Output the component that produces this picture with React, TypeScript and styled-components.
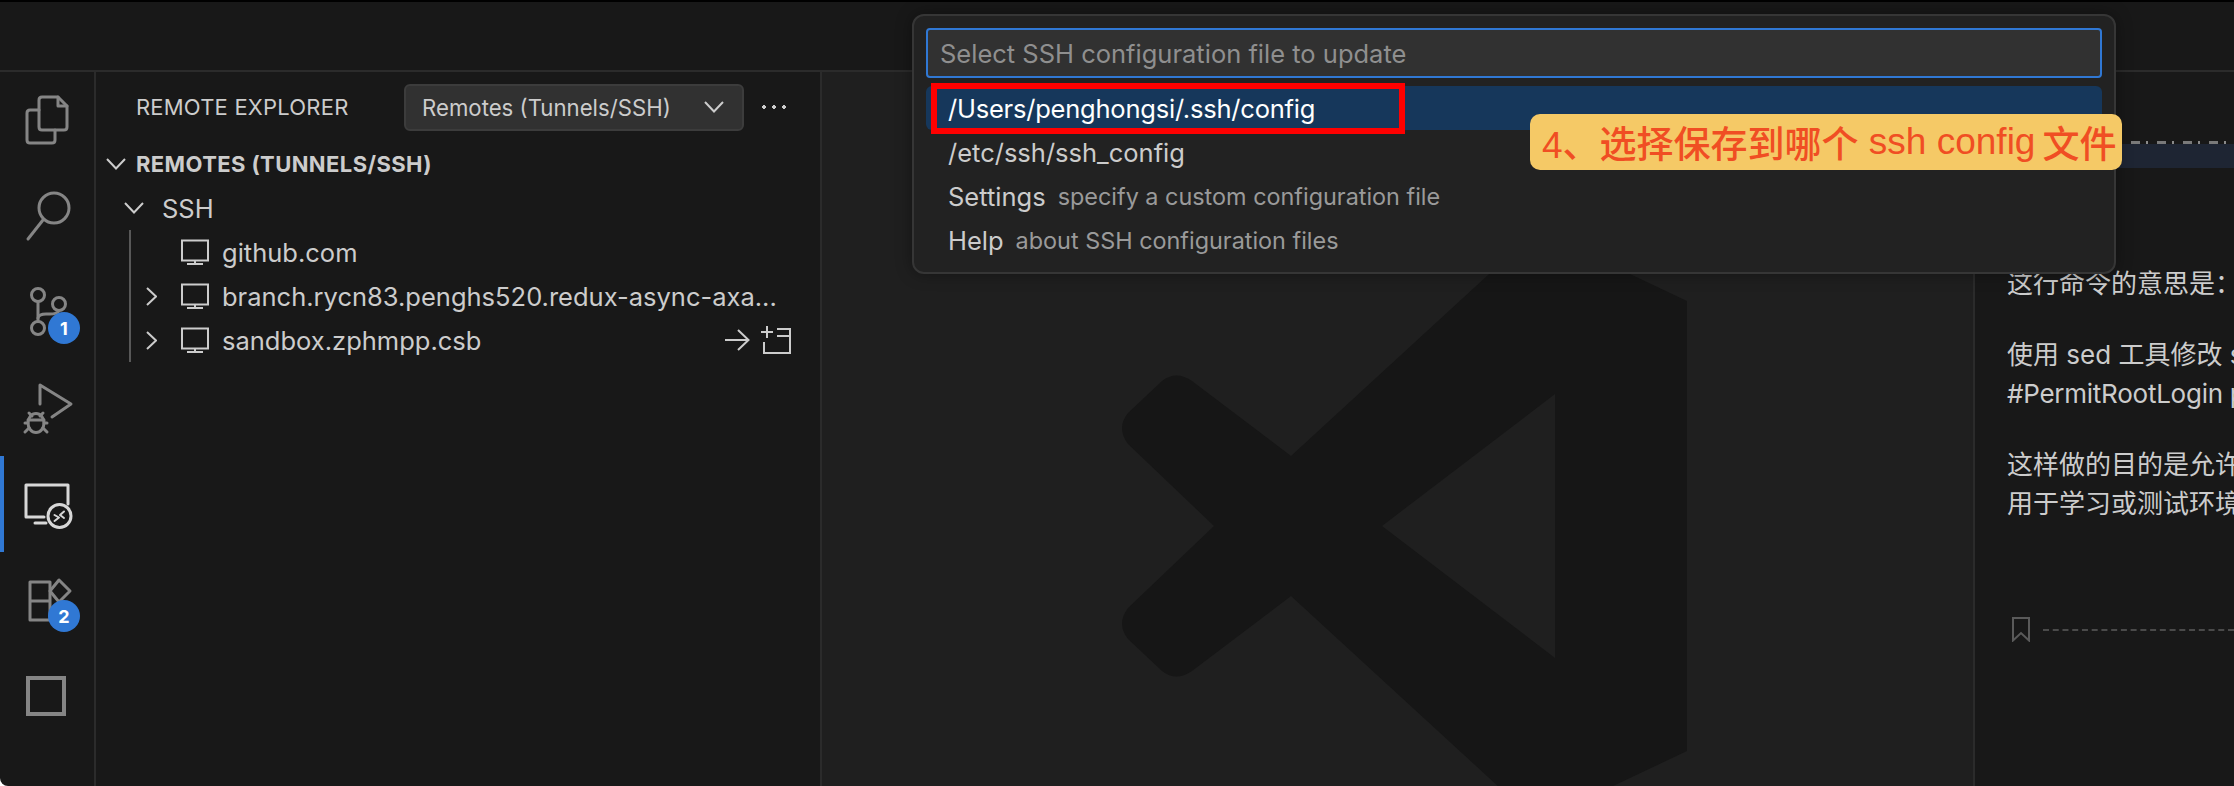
import * as React from 'react';
import styled, { createGlobalStyle } from 'styled-components';

const GlobalStyle = createGlobalStyle`
    html, body {
        margin: 0;
        padding: 0;
        width: 2234px;
        height: 786px;
        overflow: hidden;
        background: #ffffff;
    }
    * {
        box-sizing: border-box;
    }
`;

const UI_FONT = `Inter, "Noto Sans", "Noto Sans CJK SC", sans-serif`;

const Window = styled.div`
    position: relative;
    width: 2234px;
    height: 786px;
    display: flex;
    flex-direction: column;
    overflow: hidden;
    border-bottom-left-radius: 8px;
    background: #181818;
    color: #cccccc;
    font-family: ${UI_FONT};
`;
const TitleBar = styled.div`
    flex: none;
    height: 72px;
    border-top: 2px solid #000000;
    border-bottom: 2px solid #2b2b2b;
    background: #181818;
`;
const Body = styled.div`
    flex: 1;
    display: flex;
    min-height: 0;
`;

// activity bar
const ActivityBar = styled.div`
    flex: none;
    width: 96px;
    display: flex;
    flex-direction: column;
    border-right: 2px solid #2b2b2b;
`;
const ActivityItem = styled.div<{ $active?: boolean }>`
    position: relative;
    flex: none;
    width: 94px;
    height: 96px;
    color: ${p => (p.$active ? '#d7d7d7' : '#858585')};
    box-shadow: ${p => (p.$active ? 'inset 4px 0 0 #3078d4' : 'none')};
    svg {
        display: block;
    }
`;
const Badge = styled.div`
    position: absolute;
    left: 48px;
    top: 48px;
    width: 32px;
    height: 32px;
    border-radius: 50%;
    background: #3078d4;
    color: #ffffff;
    font-size: 18px;
    font-weight: 700;
    display: flex;
    align-items: center;
    justify-content: center;
`;

// sidebar
const Sidebar = styled.div`
    flex: none;
    width: 726px;
    display: flex;
    flex-direction: column;
    border-right: 2px solid #2b2b2b;
`;
const SidebarHeader = styled.div`
    flex: none;
    height: 70px;
    display: flex;
    align-items: center;
    padding: 0 34px 0 40px;
`;
const SidebarTitle = styled.div`
    flex: 1;
    font-size: 22px;
    letter-spacing: 0.2px;
    color: #cccccc;
`;
const SelectBox = styled.div`
    flex: none;
    width: 340px;
    height: 47px;
    display: flex;
    align-items: center;
    justify-content: space-between;
    padding: 0 18px 0 16px;
    background: #313131;
    border: 2px solid #3c3c3c;
    border-radius: 6px;
    font-size: 22.2px;
    color: #cccccc;
`;
const MoreDots = styled.div`
    flex: none;
    margin-left: 18px;
    width: 24px;
    height: 4px;
    background: radial-gradient(circle 2px at 2px 2px, #cccccc 98%, transparent) 0 0 / 10px 4px repeat-x;
`;
const TreeRow = styled.div<{ $indent: number; $slot: number }>`
    flex: none;
    height: 44px;
    display: flex;
    align-items: center;
    padding-left: ${p => p.$indent}px;
    font-size: 25.5px;
    white-space: nowrap;
    > svg:first-child {
        flex: none;
        margin-right: ${p => p.$slot}px;
    }
`;
const SectionRow = styled(TreeRow)`
    font-size: 22px;
    font-weight: 700;
    letter-spacing: 0.4px;
`;
const TreeGroup = styled.div`
    flex: none;
    margin-left: 33px;
    border-left: 2px solid #585858;
    display: flex;
    flex-direction: column;
`;
const HostRow = styled.div`
    flex: none;
    height: 44px;
    display: flex;
    align-items: center;
    font-size: 25.5px;
    white-space: nowrap;
`;
const ChevronSlot = styled.div`
    flex: none;
    width: 34px;
    margin-left: 15px;
    display: flex;
    align-items: center;
`;
const HostIcon = styled.svg`
    flex: none;
    margin-right: 12px;
`;
const HostActions = styled.div`
    margin-left: auto;
    display: flex;
    align-items: center;
    margin-right: 29px;
    gap: 10px;
`;

// editor
const Editor = styled.div`
    flex: none;
    width: 1153px;
    overflow: hidden;
    padding: 158px 0 0 294px;
    background: #1f1f1f;
    border-right: 2px solid #2b2b2b;
`;
const Watermark = styled.svg`
    display: block;
    fill: #161616;
`;

// right panel
const ChatPanel = styled.div`
    flex: 1;
    min-width: 0;
    overflow: hidden;
    background: #181818;
    font-size: 26px;
    line-height: 39px;
    color: #cccccc;
    white-space: nowrap;
`;
const ClippedLine = styled.div`
    height: 3px;
    margin-top: 69px;
    background: repeating-linear-gradient(90deg, #7a7a7a 0 9px, transparent 9px 15px, #8a8a8a 15px 17px, transparent 17px 26px);
`;
const CodeBand = styled.div`
    height: 24px;
    background: #1e2533;
`;
const Paragraphs = styled.div`
    margin-top: 96px;
    padding-left: 32px;
    display: flex;
    flex-direction: column;
    gap: 32px;
`;
const Paragraph = styled.div``;
const LatinLine = styled.div`
    letter-spacing: -0.25px;
`;
const Separator = styled.div`
    display: flex;
    align-items: center;
    margin-top: 94px;
    padding-left: 37px;
    gap: 13px;
    color: #5a5a5a;
`;
const DashedRule = styled.div`
    flex: 1;
    border-top: 2px dashed #4a4a4a;
`;

// quick pick
const QuickPick = styled.div`
    position: absolute;
    left: 912px;
    top: 14px;
    width: 1204px;
    height: 260px;
    padding: 12px;
    background: #222222;
    border: 2px solid #363636;
    border-radius: 12px;
    box-shadow: 0 0 16px rgba(0, 0, 0, 0.36);
    font-size: 25.5px;
`;
const PickInput = styled.div`
    height: 50px;
    display: flex;
    align-items: center;
    padding: 1px 12px 0;
    background: #313131;
    border: 2px solid #3078d4;
    border-radius: 4px;
    color: #8f8f8f;
`;
const PickList = styled.div`
    margin-top: 8px;
    display: flex;
    flex-direction: column;
`;
const PickRow = styled.div<{ $selected?: boolean }>`
    height: 44px;
    padding: 0 22px;
    display: flex;
    align-items: center;
    gap: 12px;
    border-radius: 6px;
    color: ${p => (p.$selected ? '#ffffff' : '#cccccc')};
    background: ${p => (p.$selected ? '#16375b' : 'transparent')};
    letter-spacing: ${p => (p.$selected ? '-0.22px' : '0')};
    white-space: nowrap;
`;
const PickDetail = styled.span`
    font-size: 23.4px;
    color: #9a9a9a;
`;
const RedBox = styled.div`
    position: absolute;
    left: 931px;
    top: 83px;
    width: 474px;
    height: 51px;
    border: 6px solid #ff0000;
`;
const Callout = styled.div`
    position: absolute;
    left: 1530px;
    top: 114px;
    width: 592px;
    height: 56px;
    padding-left: 12px;
    display: flex;
    align-items: center;
    background: #f5c966;
    border-radius: 10px;
    color: #f04e23;
    font-family: "Liberation Sans", "Noto Sans CJK SC", sans-serif;
    font-size: 37px;
    font-weight: 500;
    white-space: pre;
`;
const CalloutLatin = styled.span`
    font-weight: 400;
    margin-right: 7px;
`;

const ActivityIcon: React.FC<{ children: React.ReactNode }> = ({ children }) => (
    <svg width="94" height="96" viewBox="0 0 94 96" fill="none" stroke="currentColor" strokeWidth="3" strokeLinejoin="round" strokeLinecap="round">
        {children}
    </svg>
);

const ChevronDown = ({ size = 20 }: { size?: number }) => (
    <svg width={size} height={size * 0.6} viewBox="0 0 20 12" fill="none" stroke="#cccccc" strokeWidth="2">
        <path d="M1 1 L10 10.5 L19 1"/>
    </svg>
);
const ChevronRight = () => (
    <svg width="11" height="19" viewBox="0 0 11 19" fill="none" stroke="#cccccc" strokeWidth="2">
        <path d="M1 1 L10 9.5 L1 18"/>
    </svg>
);
const Monitor = () => (
    <HostIcon width="30" height="26" viewBox="0 0 30 26" fill="none" stroke="#cccccc" strokeWidth="2">
        <path d="M2 1.5 H28 V21.5 H2 Z"/>
        <path d="M15 21.5 V24.5 M7 25 H23"/>
    </HostIcon>
);

const App: React.FC = () => (
    <Window>
        <GlobalStyle/>
        <TitleBar/>
        <Body>
            <ActivityBar>
                <ActivityItem>
                    <ActivityIcon>
                        <path d="M39 35 V28 Q39 25 42 25 H58 L67 34 V55 Q67 58 64 58 H42 Q39 58 39 55 Z"/>
                        <path d="M58 25 V34 H67"/>
                        <path d="M39 38 H30 Q27 38 27 41 V68 Q27 71 30 71 H52 Q55 71 55 68 V58"/>
                    </ActivityIcon>
                </ActivityItem>
                <ActivityItem>
                    <ActivityIcon>
                        <circle cx="54" cy="40" r="15"/>
                        <path d="M43 52 L28 71"/>
                    </ActivityIcon>
                </ActivityItem>
                <ActivityItem>
                    <ActivityIcon>
                        <circle cx="38" cy="31" r="6.5"/>
                        <circle cx="59" cy="40" r="6.5"/>
                        <circle cx="38" cy="64" r="6.5"/>
                        <path d="M38 38 V57"/>
                        <path d="M38 54 Q39 50 46 50 H50 Q57 50 59 47"/>
                    </ActivityIcon>
                    <Badge>1</Badge>
                </ActivityItem>
                <ActivityItem>
                    <ActivityIcon>
                        <path d="M40 44 V25 L71 44 L52 57"/>
                        <ellipse cx="36" cy="63" rx="8" ry="9.5"/>
                        <path d="M28 60 H44 M29 53 L32 56 M43 53 L40 56 M25 63 H28 M44 63 H47 M25 72 L29 68 M47 72 L43 68"/>
                    </ActivityIcon>
                </ActivityItem>
                <ActivityItem $active>
                    <ActivityIcon>
                        <path d="M68 48 V29 H26 V61 H44"/>
                        <path d="M35 67 H46"/>
                        <circle cx="59.5" cy="60" r="11.5"/>
                        <path d="M54.5 59 L59 61.5 L54.5 65" strokeWidth="2"/>
                        <path d="M64 55.5 L60 59 L64 62" strokeWidth="2"/>
                    </ActivityIcon>
                </ActivityItem>
                <ActivityItem>
                    <ActivityIcon>
                        <path d="M30 30 H50 V68 H30 Z M30 49 H50"/>
                        <path d="M59 28 L70 39 L59 50 L50 39 Z"/>
                    </ActivityIcon>
                    <Badge>2</Badge>
                </ActivityItem>
                <ActivityItem>
                    <svg width="94" height="96" viewBox="0 0 94 96" fill="none" stroke="currentColor" strokeWidth="4">
                        <rect x="28" y="30" width="36" height="36"/>
                    </svg>
                </ActivityItem>
            </ActivityBar>
            <Sidebar>
                <SidebarHeader>
                    <SidebarTitle>REMOTE EXPLORER</SidebarTitle>
                    <SelectBox>
                        <span>Remotes (Tunnels/SSH)</span>
                        <ChevronDown/>
                    </SelectBox>
                    <MoreDots/>
                </SidebarHeader>
                <SectionRow $indent={10} $slot={10}>
                    <ChevronDown/>
                    REMOTES (TUNNELS/SSH)
                </SectionRow>
                <TreeRow $indent={28} $slot={18}>
                    <ChevronDown/>
                    SSH
                </TreeRow>
                <TreeGroup>
                    <HostRow>
                        <ChevronSlot/>
                        <Monitor/>
                        github.com
                    </HostRow>
                    <HostRow>
                        <ChevronSlot><ChevronRight/></ChevronSlot>
                        <Monitor/>
                        branch.rycn83.penghs520.redux-async-axa...
                    </HostRow>
                    <HostRow>
                        <ChevronSlot><ChevronRight/></ChevronSlot>
                        <Monitor/>
                        sandbox.zphmpp.csb
                        <HostActions>
                            <svg width="26" height="22" viewBox="0 0 26 22" fill="none" stroke="#cccccc" strokeWidth="2">
                                <path d="M1 11 H24 M14 1 L24.5 11 L14 21"/>
                            </svg>
                            <svg width="31" height="28" viewBox="0 0 31 28" fill="none" stroke="#cccccc" strokeWidth="2">
                                <path d="M7 0 V12 M1 6 H13 M17 3 H30 V27 H4 V16 M17 10 H30"/>
                            </svg>
                        </HostActions>
                    </HostRow>
                </TreeGroup>
            </Sidebar>
            <Editor>
                <Watermark width="571" height="592" viewBox="1116 230 571 592">
                    <path fillRule="evenodd" d="M1537 230 L1687 301 V751 L1537 822 L1291 596 L1192 671 Q1176 682 1162 671 L1128 639 Q1116 624 1128 608 L1214 526 L1128 444 Q1116 428 1128 413 L1162 381 Q1176 370 1192 381 L1291 456 Z M1555 394 L1382 526 L1555 658 Z"/>
                </Watermark>
            </Editor>
            <ChatPanel>
                <ClippedLine/>
                <CodeBand/>
                <Paragraphs>
                    <Paragraph>这行命令的意思是：</Paragraph>
                    <Paragraph>
                        使用 sed 工具修改 sshd_config<br/>
                        <LatinLine>#PermitRootLogin prohibit-password</LatinLine>
                    </Paragraph>
                    <Paragraph>
                        这样做的目的是允许 root 用户通过<br/>
                        用于学习或测试环境
                    </Paragraph>
                </Paragraphs>
                <Separator>
                    <svg width="18" height="25" viewBox="0 0 18 25" fill="none" stroke="currentColor" strokeWidth="2">
                        <path d="M1 1 H17 V23.5 L9 16 L1 23.5 Z"/>
                    </svg>
                    <DashedRule/>
                </Separator>
            </ChatPanel>
        </Body>
        <QuickPick>
            <PickInput>Select SSH configuration file to update</PickInput>
            <PickList>
                <PickRow $selected>/Users/penghongsi/.ssh/config</PickRow>
                <PickRow>/etc/ssh/ssh_config</PickRow>
                <PickRow>Settings <PickDetail>specify a custom configuration file</PickDetail></PickRow>
                <PickRow>Help <PickDetail>about SSH configuration files</PickDetail></PickRow>
            </PickList>
        </QuickPick>
        <RedBox/>
        <Callout>4、选择保存到哪个 <CalloutLatin>ssh config</CalloutLatin>文件</Callout>
    </Window>
);

export default App;
